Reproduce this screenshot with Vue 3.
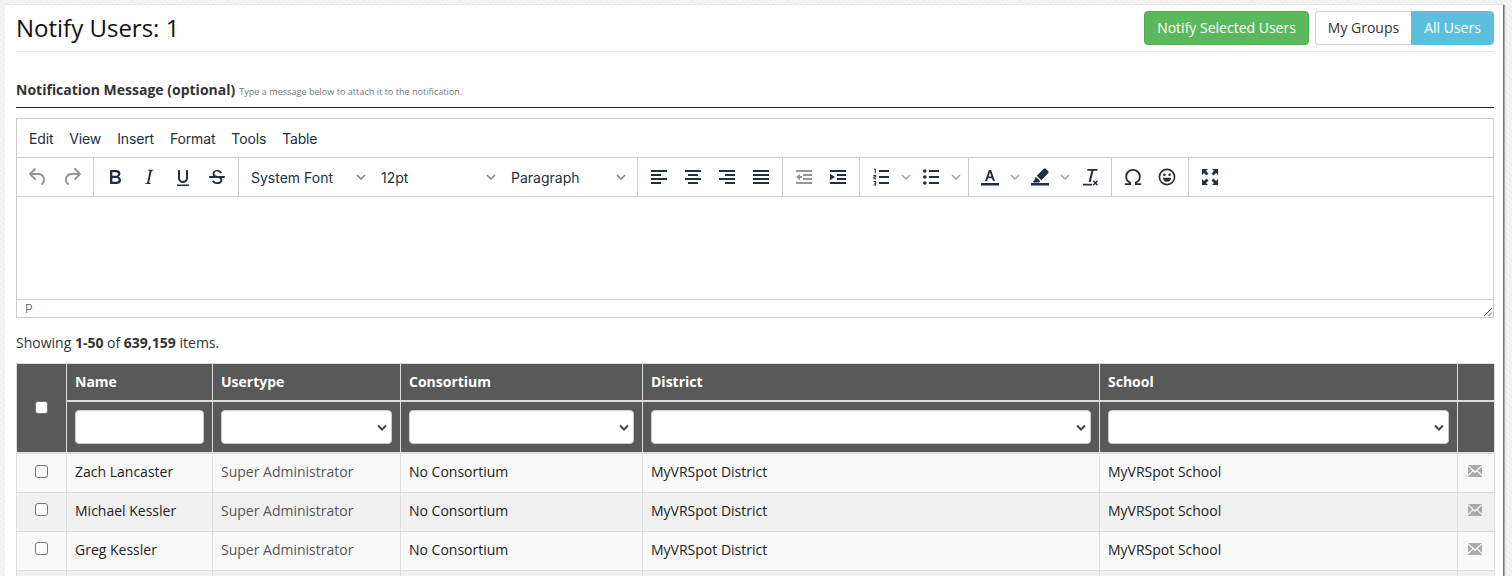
<template>
  <div class="page">
    <div class="panel">
      <div class="title-row">
        <h1>Notify Users: 1</h1>
        <div class="actions">
          <button class="btn btn-green">Notify Selected Users</button>
          <div class="btn-group">
            <button class="btn btn-white">My Groups</button>
            <button class="btn btn-blue">All Users</button>
          </div>
        </div>
      </div>

      <div class="section-title">
        <b>Notification Message (optional)</b>
        <small>Type a message below to attach it to the notification.</small>
      </div>

      <div class="editor">
        <div class="menubar">
          <span v-for="m in menus" :key="m">{{ m }}</span>
        </div>
        <div class="toolbar">
          <div v-for="(group, i) in toolbar" :key="i" class="tgroup">
            <template v-for="item in group" :key="item.name">
              <div v-if="item.select" class="tselect">
                <span>{{ item.select }}</span>
                <svg class="chev" width="10" height="6" viewBox="0 0 10 6"><path d="M1 1l4 4 4-4" /></svg>
              </div>
              <template v-else>
                <div class="tbtn" :class="{ off: item.off }">
                  <svg width="24" height="24" viewBox="0 0 24 24">
                    <path v-if="icons[item.name]" :d="icons[item.name]" />
                    <path v-if="item.name === 'omega'" class="line" :d="omega" />
                    <circle v-if="item.name === 'emoji'" class="ring" cx="12" cy="12" r="7.6" />
                  </svg>
                </div>
                <div v-if="item.split" class="tchev">
                  <svg class="chev" width="10" height="6" viewBox="0 0 10 6"><path d="M1 1l4 4 4-4" /></svg>
                </div>
              </template>
            </template>
          </div>
        </div>
        <div class="edit-area"></div>
        <div class="statusbar">
          <span>P</span>
          <svg class="grip" width="10" height="10" viewBox="0 0 10 10"><path d="M1 9l8-8M5.5 9L9 5.5" /></svg>
        </div>
      </div>

      <p class="summary">Showing <b>1-50</b> of <b>639,159</b> items.</p>

      <table class="grid">
        <colgroup>
          <col v-for="(w, i) in colWidths" :key="i" :style="{ width: w + 'px' }" />
        </colgroup>
        <thead>
          <tr class="head-labels">
            <th rowspan="2" class="check-cell"><input type="checkbox" class="check" /></th>
            <th>Name</th>
            <th>Usertype</th>
            <th>Consortium</th>
            <th>District</th>
            <th>School</th>
            <th></th>
          </tr>
          <tr class="head-filters">
            <td><input type="text" class="filter" /></td>
            <td v-for="n in 4" :key="n"><select class="filter"></select></td>
            <td></td>
          </tr>
        </thead>
        <tbody>
          <tr v-for="u in users" :key="u.name">
            <td class="check-cell"><input type="checkbox" class="check" /></td>
            <td>{{ u.name }}</td>
            <td class="muted">{{ u.type }}</td>
            <td>{{ u.consortium }}</td>
            <td>{{ u.district }}</td>
            <td>{{ u.school }}</td>
            <td class="mail-cell">
              <svg width="14" height="12" viewBox="0 0 14 12" class="mail">
                <path d="M0 0h14L7 6zM0 1.6v8.2l4.4-4.3zM14 1.6v8.2L9.6 5.5zM0 11.5V12h14v-.5L8.9 6.6 7 8.2 5.1 6.6z" />
              </svg>
            </td>
          </tr>
          <tr class="cut-row">
            <td v-for="n in 7" :key="n"></td>
          </tr>
        </tbody>
      </table>
    </div>
  </div>
</template>

<script setup>
const menus = ["Edit", "View", "Insert", "Format", "Tools", "Table"];

const toolbar = [
  [{ name: "undo", off: true }, { name: "redo", off: true }],
  [{ name: "bold" }, { name: "italic" }, { name: "underline" }, { name: "strike" }],
  [
    { name: "font", select: "System Font" },
    { name: "size", select: "12pt" },
    { name: "block", select: "Paragraph" },
  ],
  [{ name: "alignLeft" }, { name: "alignCenter" }, { name: "alignRight" }, { name: "justify" }],
  [{ name: "outdent", off: true }, { name: "indent" }],
  [{ name: "numList", split: true }, { name: "bulList", split: true }],
  [{ name: "textColor", split: true }, { name: "highlight", split: true }, { name: "clear" }],
  [{ name: "omega" }, { name: "emoji" }],
  [{ name: "fullscreen" }],
];

const icons = {
  undo: "M6.4 8H12c3.7 0 6.2 2 6.8 5.1.6 2.7-.4 5.6-2.3 6.8a1 1 0 0 1-1-1.8c1.1-.6 1.8-2.7 1.4-4.6-.5-2.1-2.1-3.5-4.9-3.5H6.4l3.3 3.3a1 1 0 1 1-1.4 1.4l-5-5a1 1 0 0 1 0-1.4l5-5a1 1 0 0 1 1.4 1.4L6.4 8z",
  redo: "M17.6 10H12c-2.8 0-4.4 1.4-4.9 3.5-.4 2 .3 4 1.4 4.6a1 1 0 1 1-1 1.8c-2-1.2-2.9-4.1-2.3-6.8.6-3 3-5.1 6.8-5.1h5.6l-3.3-3.3a1 1 0 1 1 1.4-1.4l5 5a1 1 0 0 1 0 1.4l-5 5a1 1 0 0 1-1.4-1.4l3.3-3.3z",
  bold: "M7.8 19c-.3 0-.5 0-.6-.2l-.2-.5V5.7c0-.2 0-.4.2-.5l.6-.2h5c1.5 0 2.7.3 3.5 1 .7.6 1.1 1.4 1.1 2.5a3 3 0 0 1-.6 1.9c-.4.6-1 1-1.6 1.2.4.1.9.3 1.3.6s.8.7 1 1.2c.4.4.5 1 .5 1.6 0 1.3-.4 2.3-1.3 3-.8.7-2.1 1-3.8 1H7.8zm5-8.3c.6 0 1.2-.1 1.6-.5.4-.3.6-.7.6-1.3 0-1.1-.8-1.7-2.3-1.7H9.3v3.5h3.4zm.5 6c.7 0 1.3-.1 1.7-.4.4-.4.6-.9.6-1.5s-.2-1-.7-1.4c-.4-.3-1-.4-2-.4H9.4v3.8h4z",
  italic: "M16.7 4.7l-.1.9h-.3c-.6 0-1 0-1.4.3-.3.3-.4.6-.5 1.1l-2.1 9.8v.6c0 .5.4.8 1.4.8h.2l-.2.8H8l.2-.8h.2c1.1 0 1.8-.5 2-1.5l2-9.8.1-.5c0-.6-.4-.8-1.4-.8h-.3l.2-.9h5.8z",
  underline: "M16 5c.6 0 1 .4 1 1v7c0 2.8-2.2 5-5 5s-5-2.2-5-5V6c0-.6.4-1 1-1s1 .4 1 1v7c0 1.7 1.3 3 3 3s3-1.3 3-3V6c0-.6.4-1 1-1zM6 19.5h12v1.6H6z",
  strike: "M15.6 8.5c-.5-.7-1-1.1-1.3-1.3-.6-.4-1.3-.6-2-.6-2.7 0-2.8 1.7-2.8 2.1 0 1.6 1.8 2 3.2 2.3 4.4.9 4.6 2.8 4.6 3.9 0 1.4-.7 4.1-5 4.1A6.2 6.2 0 0 1 7 16.4l1.5-1.1c.4.6 1.6 2 3.7 2 1.6 0 2.5-.4 3-1.2.4-.8.3-2-.8-2.6-.7-.4-1.6-.7-2.9-1-1-.2-3.9-.8-3.9-3.6C7.6 6 10.3 5 12.4 5c2.9 0 4.2 1.6 4.7 2.4l-1.5 1.1zM5 11h14a1 1 0 0 1 0 2H5a1 1 0 0 1 0-2z",
  alignLeft: "M4 5h16v2H4zM4 9h10v2H4zM4 13h16v2H4zM4 17h10v2H4z",
  alignCenter: "M4 5h16v2H4zM7 9h10v2H7zM4 13h16v2H4zM7 17h10v2H7z",
  alignRight: "M4 5h16v2H4zM10 9h10v2H10zM4 13h16v2H4zM10 17h10v2H10z",
  justify: "M4 5h16v2H4zM4 9h16v2H4zM4 13h16v2H4zM4 17h16v2H4z",
  outdent: "M4 5h16v2H4zM11 9h9v2h-9zM11 13h9v2h-9zM4 17h16v2H4zM8 8.8V11h2v2H8v2.2L4 12z",
  indent: "M4 5h16v2H4zM11 9h9v2h-9zM11 13h9v2h-9zM4 17h16v2H4zM4 8.8L9 12l-5 3.2z",
  numList: "M10 5h10v2H10zM10 11h10v2H10zM10 17h10v2H10zM5 3.8h1.8v4.4h-1V4.8H5zM4.5 10h2.7v2.5H5.6v.7h1.6v1H4.5v-2.6h1.6v-.6H4.5zM4.5 16h2.7v4.4H4.5v-1h1.6v-.8H5v-.8h1.1V17H4.5z",
  bulList: "M10 5h10v2H10zM10 11h10v2H10zM10 17h10v2H10zM5.8 4.2a1.8 1.8 0 1 1 0 3.6 1.8 1.8 0 0 1 0-3.6zM5.8 10.2a1.8 1.8 0 1 1 0 3.6 1.8 1.8 0 0 1 0-3.6zM5.8 16.2a1.8 1.8 0 1 1 0 3.6 1.8 1.8 0 0 1 0-3.6z",
  textColor: "M3 18h18v2.5H3zM10.9 5h2.2L17 16h-2.1l-.9-2.7h-4L9.1 16H7zM10.6 11.6h2.8L12 7.4z",
  highlight: "M3 18h18v2.5H3zM15.7 3.8a1.5 1.5 0 0 1 2.1 0l2.4 2.4a1.5 1.5 0 0 1 0 2.1l-6.9 6.9-4.5-4.5zM7.8 11.7l4.5 4.5-1.3 1.3H5.8l-1-1 1.7-1.6z",
  clear: "M9.5 4h10v1.7h-4L12.7 17h-2.1l2.8-11.3H9.1zM5 18.8h9v1.7H5zM15.6 15.3l1.7 1.7 1.7-1.7 1 1-1.7 1.7 1.7 1.7-1 1-1.7-1.7-1.7 1.7-1-1 1.7-1.7-1.7-1.7z",
  emoji: "M9.4 8.5a1.3 1.3 0 1 1 0 2.6 1.3 1.3 0 0 1 0-2.6zM14.6 8.5a1.3 1.3 0 1 1 0 2.6 1.3 1.3 0 0 1 0-2.6zM7.9 12.8h8.2c0 2.4-1.8 4-4.1 4s-4.1-1.6-4.1-4z",
  fullscreen: "M4 4h6L8 6l2.5 2.5-2 2L6 8l-2 2zM20 4h-6l2 2-2.5 2.5 2 2L18 8l2 2zM4 20h6l-2-2 2.5-2.5-2-2L6 16l-2-2zM20 20h-6l2-2-2.5-2.5 2-2L18 16l2-2z",
};

// omega is drawn with a stroke instead of a fill
const omega = "M3.8 19.2h5.4v-1.6c-2.5-1.1-4-3.3-4-5.9 0-4 2.9-6.9 6.8-6.9s6.8 2.9 6.8 6.9c0 2.6-1.5 4.8-4 5.9v1.6h5.4";

const colWidths = [50, 146, 188, 242, 457, 358, 37];

const users = [
  { name: "Zach Lancaster", type: "Super Administrator", consortium: "No Consortium", district: "MyVRSpot District", school: "MyVRSpot School" },
  { name: "Michael Kessler", type: "Super Administrator", consortium: "No Consortium", district: "MyVRSpot District", school: "MyVRSpot School" },
  { name: "Greg Kessler", type: "Super Administrator", consortium: "No Consortium", district: "MyVRSpot District", school: "MyVRSpot School" },
];
</script>

<style>
html,
body {
  margin: 0;
  overflow: hidden;
}
</style>

<style scoped>
.page {
  box-sizing: border-box;
  width: 1512px;
  height: 576px;
  overflow: hidden;
  padding: 5px 8px 0 5px;
  font-family: "Open Sans", sans-serif;
  font-size: 14px;
  color: #333;
  background: repeating-linear-gradient(45deg, #f4f4f4 0, #f4f4f4 3px, #ededed 3px, #ededed 4px);
}

.panel {
  box-sizing: border-box;
  height: 600px;
  padding: 0 9px 0 11px;
  background: #fff;
  border-right: 1px solid #777;
  box-shadow: 1px 0 1px #aaa;
}

.title-row {
  box-sizing: border-box;
  height: 47px;
  display: flex;
  justify-content: space-between;
  align-items: flex-start;
  padding-top: 6px;
  border-bottom: 1px solid #e5e5e5;
}

h1 {
  margin: -1px 0 0;
  font-size: 24px;
  font-weight: 400;
  line-height: 36px;
  color: #111;
}

.actions {
  display: flex;
  gap: 6px;
}

.btn {
  box-sizing: border-box;
  height: 34px;
  padding: 0 0 2px;
  font-family: inherit;
  font-size: 14px;
  white-space: nowrap;
  border: 1px solid transparent;
  border-radius: 4px;
}

.btn-green {
  width: 165px;
  color: #fff;
  background: #5cb85c;
  border-color: #4cae4c;
}

.btn-group {
  display: flex;
}

.btn-white {
  width: 96px;
  color: #333;
  background: #fff;
  border-color: #ccc;
  border-radius: 4px 0 0 4px;
  border-right: 0;
}

.btn-blue {
  width: 83px;
  color: #fff;
  background: #5bc0de;
  border-color: #5bc0de;
  border-radius: 0 4px 4px 0;
}

.section-title {
  box-sizing: border-box;
  height: 56px;
  padding-top: 27px;
  line-height: 22px;
  border-bottom: 1px solid #222;
}

.section-title b {
  font-size: 14px;
  font-weight: 700;
  color: #333;
}

.section-title small {
  margin-left: 4px;
  font-size: 9.1px;
  color: #777;
}

.editor {
  box-sizing: border-box;
  height: 200px;
  margin-top: 10px;
  display: flex;
  flex-direction: column;
  border: 1px solid #ccc;
  font-family: Inter, sans-serif;
  color: #222f3e;
}

.menubar {
  box-sizing: border-box;
  height: 39px;
  flex: none;
  display: flex;
  align-items: center;
  padding-left: 4px;
  font-size: 14px;
  letter-spacing: -0.15px;
  border-bottom: 1px solid #ccc;
}

.menubar span {
  padding: 0 8px;
}

.toolbar {
  box-sizing: border-box;
  height: 39px;
  flex: none;
  display: flex;
  border-bottom: 1px solid #ccc;
}

.tgroup {
  display: flex;
  align-items: center;
  padding: 0 4px;
  border-right: 1px solid #ccc;
}

.tgroup:last-child {
  border-right: 0;
}

.tbtn {
  width: 34px;
  display: flex;
  justify-content: center;
}

.tbtn svg {
  fill: #222f3e;
}

.tbtn .line {
  fill: none;
  stroke: #222f3e;
  stroke-width: 1.8;
}

.tbtn .ring {
  fill: none;
  stroke: #222f3e;
  stroke-width: 1.6;
}

.tbtn.off svg {
  fill: rgba(34, 47, 62, 0.5);
}

.tchev {
  width: 16px;
  display: flex;
  justify-content: center;
}

.chev {
  fill: none;
  stroke: rgba(34, 47, 62, 0.45);
  stroke-width: 1.5;
}

.tselect {
  box-sizing: border-box;
  width: 130px;
  padding: 0 7px 0 8px;
  display: flex;
  justify-content: space-between;
  align-items: center;
  font-size: 14px;
}

.tselect .chev {
  stroke: rgba(34, 47, 62, 0.6);
}

.edit-area {
  flex: 1;
}

.statusbar {
  box-sizing: border-box;
  height: 18px;
  flex: none;
  padding-left: 8px;
  display: flex;
  justify-content: space-between;
  align-items: center;
  font-size: 12px;
  color: rgba(34, 47, 62, 0.7);
  border-top: 1px solid #ccc;
}

.grip {
  fill: none;
  stroke: #555;
  stroke-width: 1;
  align-self: flex-end;
}

.summary {
  margin: 15px 0 10px;
  line-height: 20px;
  font-size: 14px;
}

.grid {
  width: 1478px;
  table-layout: fixed;
  border-collapse: collapse;
  font-size: 14px;
}

.grid th,
.grid td {
  box-sizing: border-box;
  padding: 0 8px;
  text-align: left;
  border: 1px solid #ddd;
}

.grid thead th,
.grid thead td {
  color: #fff;
  background: #595959;
}

.head-labels th {
  height: 37px;
  font-weight: 700;
}

.head-filters td {
  height: 52px;
}

.head-labels th,
.head-filters td {
  border-bottom-width: 2px;
}

.grid .check-cell {
  padding: 0;
  text-align: center;
}

.check {
  appearance: none;
  display: block;
  box-sizing: border-box;
  width: 13px;
  height: 13px;
  margin: 0 auto;
  background: #fff;
  border: 1px solid #767676;
  border-radius: 3px;
}

.filter {
  display: block;
  box-sizing: border-box;
  width: 100%;
  height: 34px;
  margin-top: 1px;
  background-color: #fff;
  border: 1px solid #ccc;
  border-radius: 4px;
}

select.filter {
  appearance: none;
  background-image: url("data:image/svg+xml,%3Csvg xmlns='http://www.w3.org/2000/svg' width='10' height='7' viewBox='0 0 10 7'%3E%3Cpath d='M1 1.5l4 4 4-4' fill='none' stroke='%23444' stroke-width='2'/%3E%3C/svg%3E");
  background-repeat: no-repeat;
  background-position: right 4px center;
}

.grid tbody tr td {
  height: 39px;
  padding-bottom: 4px;
  color: #222;
  background: #f9f9f9;
}

.grid tbody tr td.check-cell {
  padding-bottom: 5px;
}

.grid tbody tr:first-child td {
  height: 40px;
  padding-bottom: 3px;
}

.grid tbody tr:nth-child(even) td {
  background: #f0f0f0;
}

.grid tbody td.muted {
  color: #555;
}

.mail {
  display: block;
  margin: -1px 0 0 2px;
  fill: #aaa;
}
</style>
